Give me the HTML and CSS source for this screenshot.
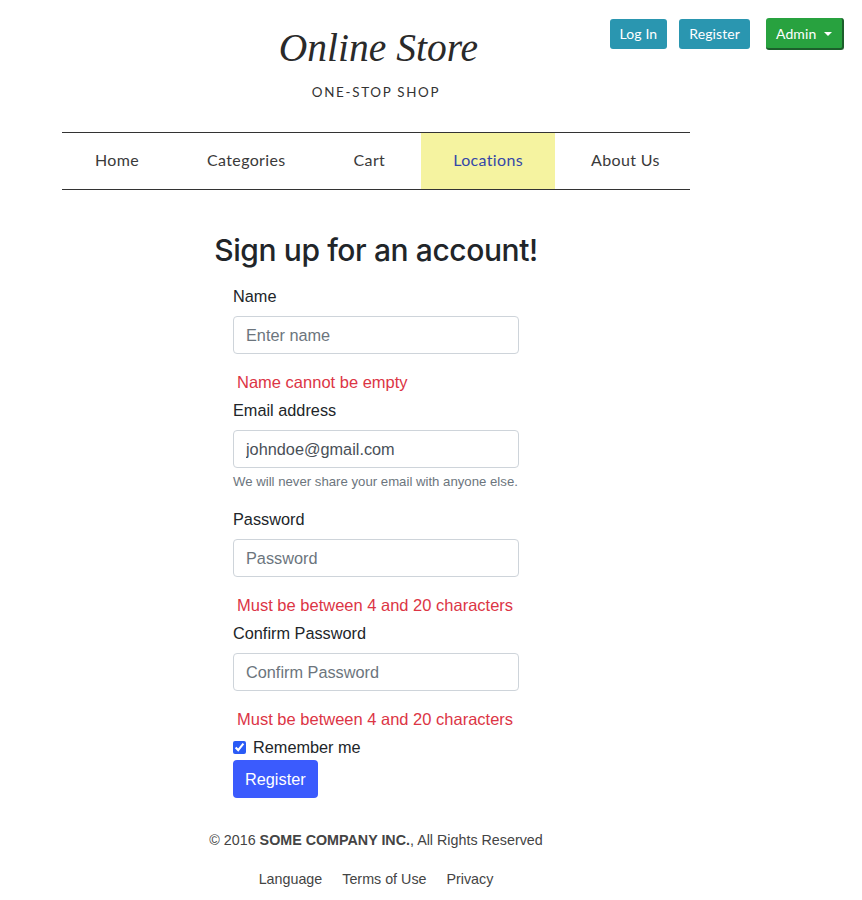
FILE: index.html
```html
<!DOCTYPE html>
<html lang="en">
<head>
<meta charset="utf-8">
<title>Online Store</title>
<link rel="stylesheet" href="styles.css">
</head>
<body>
<div class="topbar">
  <a class="tbtn info" href="#">Log In</a>
  <a class="tbtn info" href="#">Register</a>
  <a class="tbtn success" href="#">Admin <span class="caret"></span></a>
</div>
<div class="page">
  <header class="brand">
    <h1 class="logo">Online Store</h1>
    <div class="tagline">ONE-STOP SHOP</div>
  </header>
  <nav class="nav">
    <a href="#" class="nav-item">Home</a>
    <a href="#" class="nav-item">Categories</a>
    <a href="#" class="nav-item">Cart</a>
    <a href="#" class="nav-item active">Locations</a>
    <a href="#" class="nav-item">About Us</a>
  </nav>
  <main class="main">
    <h2 class="title">Sign up for an account!</h2>
    <form class="form">
      <div class="group">
        <label class="label">Name</label>
        <input class="input" type="text" placeholder="Enter name">
      </div>
      <div class="error">Name cannot be empty</div>
      <div class="group">
        <label class="label">Email address</label>
        <input class="input" type="email" value="johndoe@gmail.com">
        <small class="help">We will never share your email with anyone else.</small>
      </div>
      <div class="group">
        <label class="label">Password</label>
        <input class="input" type="password" placeholder="Password">
      </div>
      <div class="error">Must be between 4 and 20 characters</div>
      <div class="group">
        <label class="label">Confirm Password</label>
        <input class="input" type="password" placeholder="Confirm Password">
      </div>
      <div class="error">Must be between 4 and 20 characters</div>
      <label class="check"><input type="checkbox" checked> Remember me</label>
      <button type="button" class="submit">Register</button>
    </form>
  </main>
  <footer class="footer">
    <div class="copy">© 2016 <b>SOME COMPANY INC.</b>, All Rights Reserved</div>
    <div class="links">
      <a href="#">Language</a>
      <a href="#">Terms of Use</a>
      <a href="#">Privacy</a>
    </div>
  </footer>
</div>
</body>
</html>
```

FILE: styles.css
```css
* { box-sizing: border-box; }
html, body { margin: 0; padding: 0; background: #fff; }
body {
  font-family: "Liberation Sans", Arial, sans-serif;
  color: #212529;
  width: 862px;
  position: relative;
}
a { text-decoration: none; }

.topbar {
  position: absolute;
  top: 18px;
  right: 18px;
  display: flex;
  align-items: flex-start;
}
.tbtn {
  font-family: Lato, "Noto Sans", sans-serif;
  font-size: 14px;
  letter-spacing: 0.1px;
  color: #fff;
  height: 30px;
  line-height: 30px;
  padding: 0 10px;
  border-radius: 3px;
  margin-top: 1px;
  white-space: nowrap;
}
.tbtn.info { background: #2a96b0; margin-right: 12px; }
.tbtn.info + .tbtn.info { margin-right: 16px; }
.tbtn.success {
  background: #28a23f;
  margin-top: 0;
  height: 32px;
  line-height: 31px;
  border-right: 2px solid #1c5f2b;
  border-bottom: 2px solid #1c5f2b;
  padding: 0 10px 0 10px;
}
.caret {
  display: inline-block;
  width: 0; height: 0;
  border-left: 4px solid transparent;
  border-right: 4px solid transparent;
  border-top: 4px solid #fff;
  vertical-align: 3px;
  margin-left: 4px;
}

.page {
  width: 628px;
  margin-left: 62px;
}
.brand {
  text-align: center;
  padding-top: 24px;
  height: 132px;
}
.logo {
  margin: 0;
  padding-left: 5px;
  font-family: "Liberation Serif", "Times New Roman", serif;
  font-style: italic;
  font-weight: normal;
  font-size: 39.5px;
  line-height: 48px;
  color: #2a2a2a;
}
.tagline {
  font-family: Lato, "Noto Sans", sans-serif;
  font-size: 13.4px;
  letter-spacing: 1.7px;
  color: #333;
  margin-top: 12px;
}

.nav {
  display: flex;
  gap: 4px;
  border-top: 1px solid #333;
  border-bottom: 1px solid #333;
  height: 58px;
}
.nav-item {
  font-family: Lato, "Noto Sans", sans-serif;
  font-size: 16px;
  letter-spacing: 0.35px;
  color: #3a3a3a;
  padding: 0 32px;
  line-height: 54px;
  white-space: nowrap;
}
.nav-item:first-child { margin-left: 1px; }
.nav-item.active {
  background: #f5f3a0;
  color: #3447a8;
}

.main { text-align: center; padding-top: 41px; }
.title {
  margin: 0 0 15px;
  font-family: Inter, "Liberation Sans", sans-serif;
  font-weight: 500;
  font-size: 30px;
  line-height: 38px;
  letter-spacing: -0.4px;
  color: #212529;
}
.form {
  width: 286px;
  margin: 0 auto;
  text-align: left;
  font-family: "Liberation Sans", Arial, sans-serif;
  font-size: 16.3px;
}
.group { margin-bottom: 16px; display: flex; flex-direction: column; }
.label { line-height: 24px; margin-bottom: 8px; color: #212529; }
.input {
  width: 286px;
  height: 38px;
  border: 1px solid #ced4da;
  border-radius: 4px;
  padding: 6px 12px;
  font-family: "Liberation Sans", Arial, sans-serif;
  font-size: 16.3px;
  color: #495057;
}
.input::placeholder { color: #6c757d; }
.help {
  margin-top: 4px;
  font-size: 13.2px;
  line-height: 19px;
  color: #6c757d;
}
.error {
  color: #dc3545;
  line-height: 24px;
  margin-bottom: 4px;
  padding-left: 4px;
  font-size: 16.5px;
}
.check {
  display: flex;
  align-items: center;
  line-height: 24px;
  height: 24px;
}
.check input {
  margin: 0 7px 0 0;
  width: 13px; height: 13px;
  accent-color: #2a5bf6;
}
.submit {
  margin-top: 1px;
  background: #3b5bfd;
  color: #fff;
  border: none;
  border-radius: 4px;
  height: 38px;
  padding: 0 12px;
  font-family: "Liberation Sans", Arial, sans-serif;
  font-size: 16.3px;
}

.footer {
  text-align: center;
  padding-top: 31px;
  font-size: 14.3px;
  color: #444;
}
.copy { line-height: 22px; }
.links {
  margin-top: 17px;
  display: flex;
  justify-content: center;
  gap: 20px;
  line-height: 22px;
}
.links a { color: #444; }
```
